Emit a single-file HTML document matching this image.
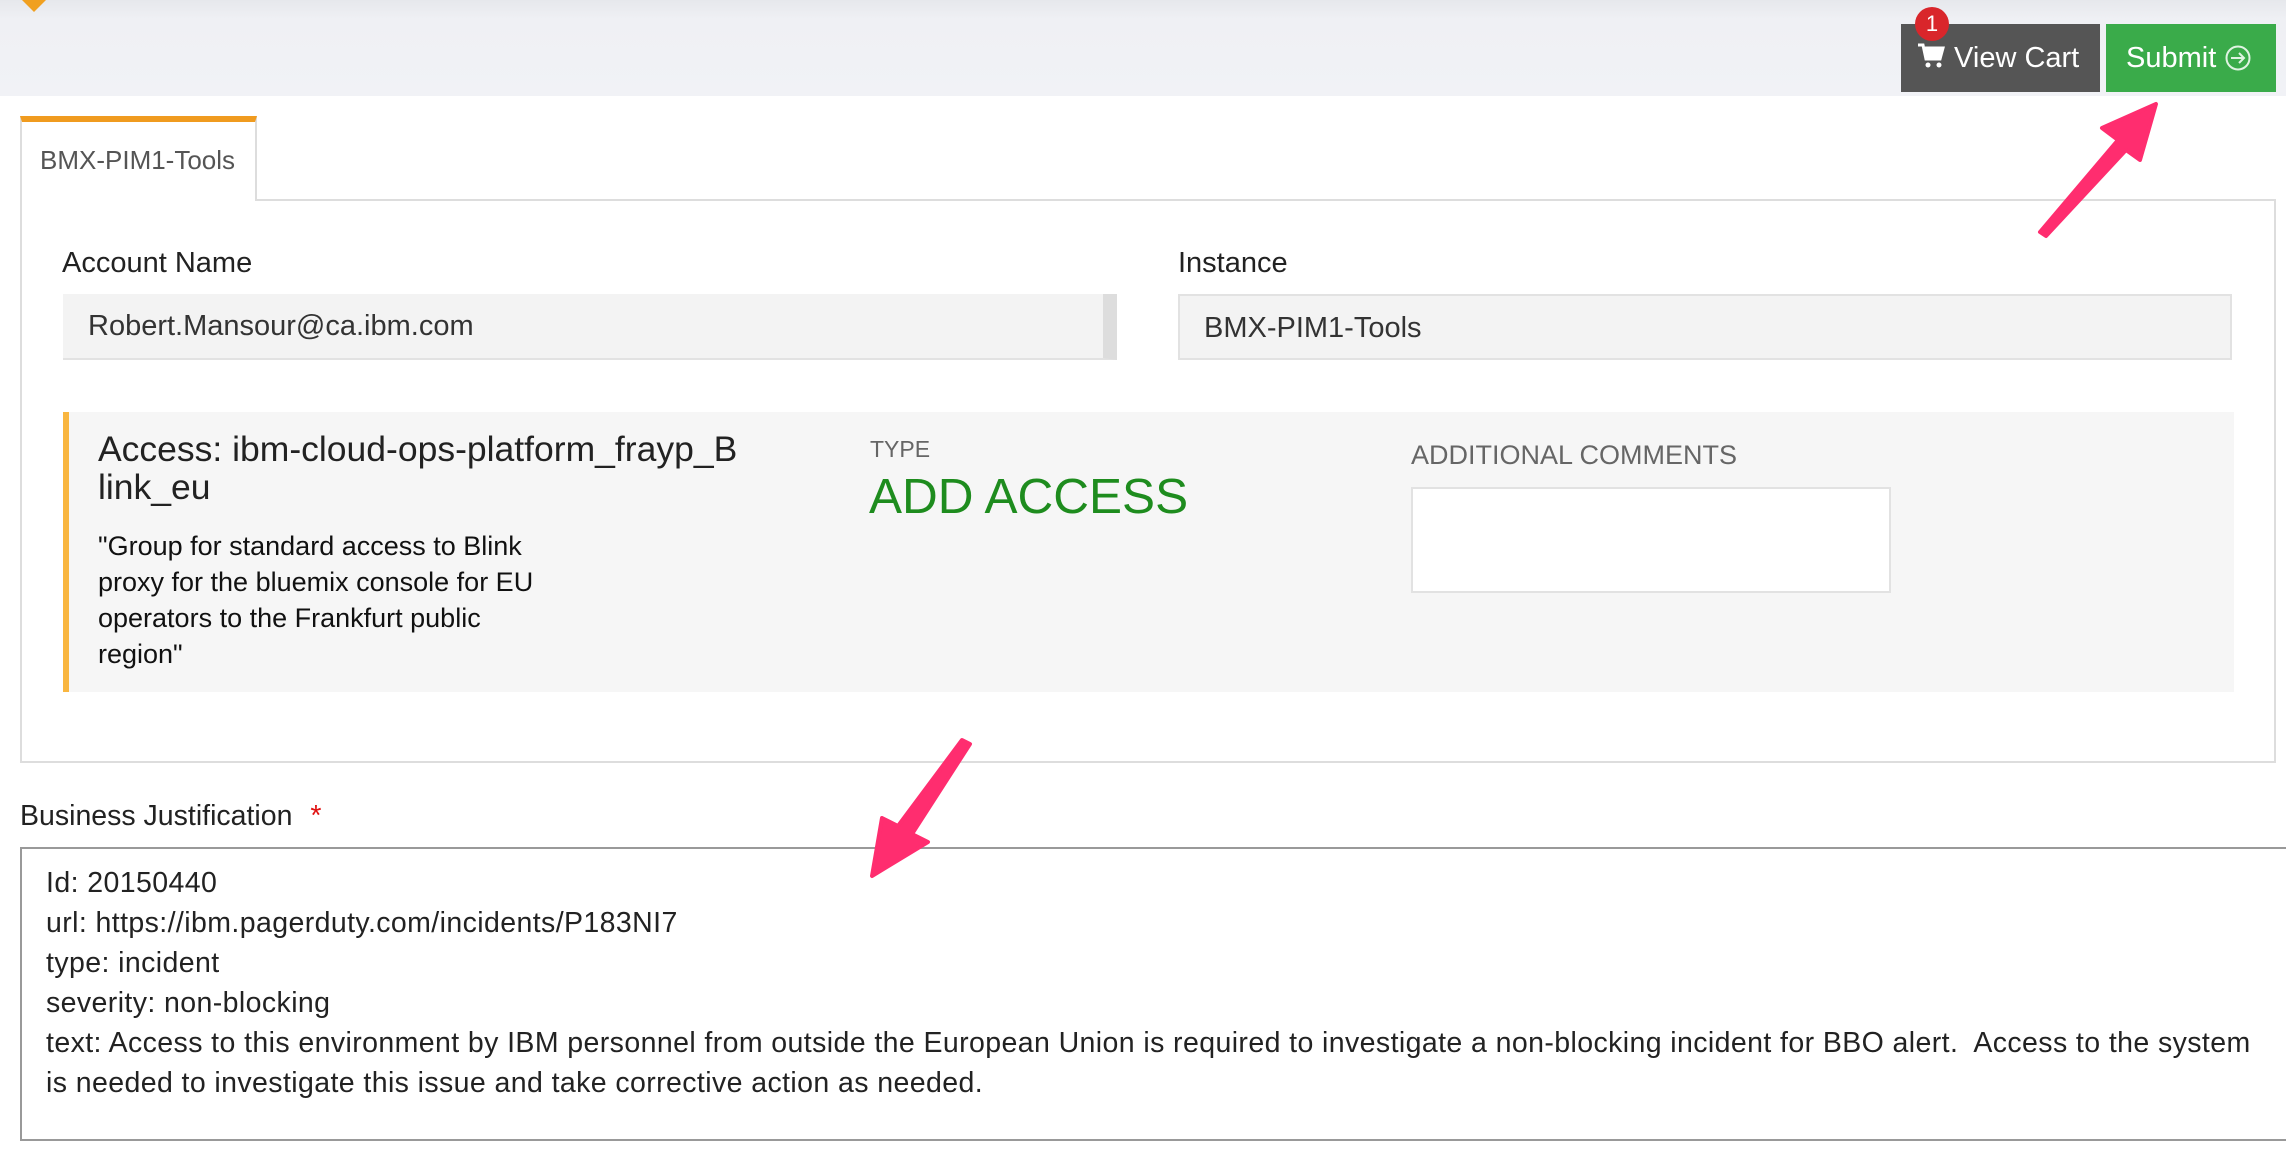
<!DOCTYPE html>
<html><head><meta charset="utf-8"><style>
*{box-sizing:border-box;margin:0;padding:0}
body{width:2286px;height:1168px;background:#fff;font-family:"Liberation Sans",sans-serif;position:relative;overflow:hidden;color:#222}
.a{position:absolute}
.hdr{left:0;top:0;width:2286px;height:96px;background:linear-gradient(#e6e8ec,#eff0f4 20%,#f1f2f6)}
</style></head><body>
<div class="a hdr"></div>
<div class="a" style="left:22px;top:0;width:0;height:0;border-left:12px solid transparent;border-right:12px solid transparent;border-top:12px solid #f0a020"></div>
<div class="a" style="left:1901px;top:24px;width:199px;height:68px;background:#555"></div>
<div class="a" style="left:1916px;top:40px;color:#fff;font-size:29px;line-height:36px">
<svg width="30" height="30" viewBox="0 0 30 30" style="vertical-align:-4px"><path d="M2 4h5l3 14h14l3-11H9" fill="none" stroke="#fff" stroke-width="3"/><path d="M9 7h18l-3 11H11z" fill="#fff"/><circle cx="12" cy="24" r="2.5" fill="#fff"/><circle cx="23" cy="24" r="2.5" fill="#fff"/></svg> View Cart</div>
<div class="a" style="left:1915px;top:7px;width:34px;height:34px;border-radius:50%;background:#d9262b;color:#fff;font-size:22px;text-align:center;line-height:34px">1</div>
<div class="a" style="left:2106px;top:24px;width:170px;height:68px;background:#3aab4a;color:#fff;font-size:29px;line-height:68px;padding-left:20px">Submit <svg width="28" height="28" viewBox="0 0 28 28" style="vertical-align:-5px"><circle cx="14" cy="14" r="11.5" fill="none" stroke="#dff3e2" stroke-width="2"/><path d="M7 14h13M15 9l5 5-5 5" fill="none" stroke="#dff3e2" stroke-width="2"/></svg></div>
<div class="a" style="left:20px;top:199px;width:2256px;height:564px;border:2px solid #ddd"></div>
<div class="a" style="left:20px;top:116px;width:237px;height:85px;background:#fff;border-left:2px solid #ddd;border-right:2px solid #ddd;border-top:6px solid #f09b1f"></div>
<div class="a" style="left:40px;top:145px;font-size:26px;color:#555">BMX-PIM1-Tools</div>
<div class="a" style="left:62px;top:247px;font-size:29px">Account Name</div>
<div class="a" style="left:63px;top:294px;width:1054px;height:66px;background:#f3f3f3;border-bottom:2px solid #e2e2e2;border-right:14px solid #ddd"></div>
<div class="a" style="left:88px;top:310px;font-size:29px;color:#333">Robert.Mansour@ca.ibm.com</div>
<div class="a" style="left:1178px;top:247px;font-size:29px">Instance</div>
<div class="a" style="left:1178px;top:294px;width:1054px;height:66px;background:#f3f3f3;border:2px solid #e2e2e2"></div>
<div class="a" style="left:1204px;top:312px;font-size:29px;color:#333">BMX-PIM1-Tools</div>
<div class="a" style="left:63px;top:412px;width:2171px;height:280px;background:#f6f6f6;border-left:6px solid #f9b640"></div>
<div class="a" style="left:98px;top:430px;font-size:35.5px;line-height:38px;color:#222;white-space:nowrap">Access: ibm-cloud-ops-platform_frayp_B<br>link_eu</div>
<div class="a" style="left:98px;top:528px;font-size:27px;line-height:36px;color:#111;white-space:nowrap">"Group for standard access to Blink<br>proxy for the bluemix console for EU<br>operators to the Frankfurt public<br>region"</div>
<div class="a" style="left:870px;top:436px;font-size:23px;color:#666">TYPE</div>
<div class="a" style="left:869px;top:468px;font-size:49.5px;color:#1e8c1e">ADD ACCESS</div>
<div class="a" style="left:1411px;top:440px;font-size:27px;color:#666">ADDITIONAL COMMENTS</div>
<div class="a" style="left:1411px;top:487px;width:480px;height:106px;background:#fff;border:2px solid #e2e2e2"></div>
<div class="a" style="left:20px;top:800px;font-size:28.5px">Business Justification <span style="color:#e01010;margin-left:10px">*</span></div>
<div class="a" style="left:20px;top:847px;width:2280px;height:294px;border:2px solid #999;background:#fff"></div>
<div class="a" style="left:46px;top:863px;font-size:28.5px;line-height:40px;color:#222;white-space:nowrap;letter-spacing:0.4px">Id: 20150440<br>url: https://ibm.pagerduty.com/incidents/P183NI7<br>type: incident<br>severity: non-blocking<br>text: Access to this environment by IBM personnel from outside the European Union is required to investigate a non-blocking incident for BBO alert.&nbsp; Access to the system<br>is needed to investigate this issue and take corrective action as needed.</div>
<svg class="a" style="left:0;top:0" width="2286" height="1168">
<path d="M2040 232 L2118 140 L2102 128 L2156 104 L2140 160 L2126 150 L2046 236 Z" fill="#ff2d6f" stroke="#ff2d6f" stroke-width="4" stroke-linejoin="round"/>
<path d="M970 744 L912 834 L928 842 L872 876 L882 818 L898 826 L962 740 Z" fill="#ff2d6f" stroke="#ff2d6f" stroke-width="4" stroke-linejoin="round"/>
</svg>
</body></html>
